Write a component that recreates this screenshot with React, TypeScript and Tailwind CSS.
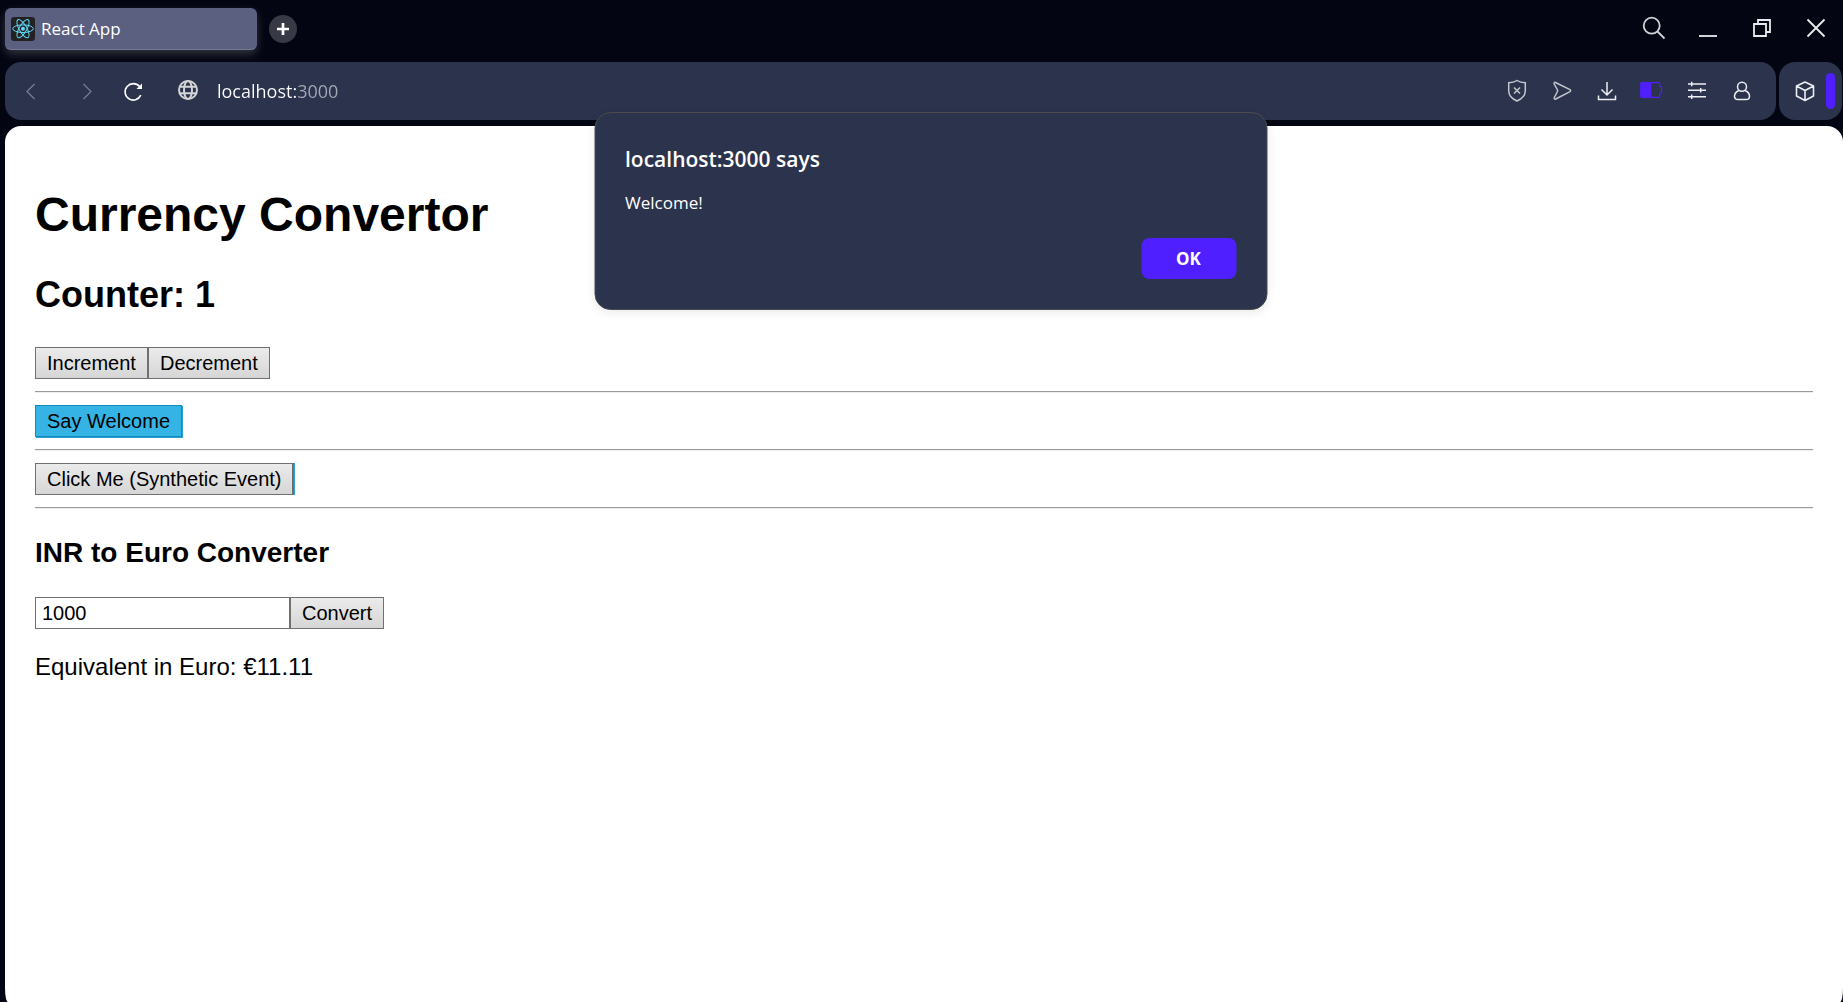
import { useState } from 'react';
import type { ReactNode } from 'react';

function Icon({ children, width = 1.5, className = '' }: { children: ReactNode; width?: number; className?: string }) {
  return (
    <svg viewBox="0 0 24 24" className={`size-6 shrink-0 ${className}`} fill="none" stroke="currentColor" strokeWidth={width} aria-hidden="true">
      {children}
    </svg>
  );
}

function BarButton({ label, className, children }: { label: string; className: string; children: ReactNode }) {
  return (
    <button type="button" aria-label={label} className={`flex h-full shrink-0 items-center justify-center ${className}`}>
      {children}
    </button>
  );
}

function ReactLogo() {
  return (
    <svg viewBox="0 0 24 24" className="size-6 shrink-0" fill="none" stroke="#61dafb" strokeWidth="1" aria-hidden="true">
      <rect width="24" height="24" rx="3" fill="#222" stroke="none" />
      <ellipse cx="12" cy="11.7" rx="10.3" ry="3.8" />
      <ellipse cx="12" cy="11.7" rx="10.3" ry="3.8" transform="rotate(60 12 11.7)" />
      <ellipse cx="12" cy="11.7" rx="10.3" ry="3.8" transform="rotate(120 12 11.7)" />
      <circle cx="12" cy="11.7" r="2" fill="#61dafb" stroke="none" />
    </svg>
  );
}

function TabBar() {
  return (
    <header className="flex h-[62px] shrink-0 items-start justify-between pl-[5px]">
      <div className="flex items-center gap-3 pt-2">
        <div className="flex h-[42px] w-[252px] items-center gap-[6px] rounded-md border-b border-[#747994] bg-[#5b6080] px-[6px] text-[17px] text-white shadow-[0_4px_10px_#ffffff30]">
          <ReactLogo />
          <span>React App</span>
        </div>
        <button type="button" aria-label="New tab" className="flex size-7 items-center justify-center rounded-full bg-[#373a45] text-white">
          <Icon width={2.7}><path d="M12 6v12M6 12h12" /></Icon>
        </button>
      </div>
      <div className="flex h-14 text-[#e8eaed]">
        <BarButton label="Search" className="w-[54px]">
          <Icon width={1.8} className="text-[#d0d2d6]"><circle cx="9.7" cy="9.7" r="8" /><path d="M15.5 15.5l7 7" /></Icon>
        </BarButton>
        <BarButton label="Minimize" className="w-[54px]">
          <Icon width={1.8}><path d="M3 20h18" /></Icon>
        </BarButton>
        <BarButton label="Restore" className="w-[54px]">
          <Icon width={1.8}><path d="M4 8h12v12H4zM8 8V4h12v12h-4" /></Icon>
        </BarButton>
        <BarButton label="Close" className="w-[54px]">
          <Icon width={1.8}><path d="M3.5 3.5l17 17M20.5 3.5l-17 17" /></Icon>
        </BarButton>
      </div>
    </header>
  );
}

function AddressBar() {
  return (
    <nav className="mb-[6px] flex h-[58px] shrink-0 gap-[3px] pr-px pl-[5px] text-[#eceef2]">
      <div className="flex grow items-center rounded-2xl bg-[#2c334d] pr-3 pl-[3px]">
        <BarButton label="Back" className="w-[46px] text-[#767c8e]">
          <Icon width={1.3}><path d="M15.5 5l-7.5 7.5 7.5 7.5" /></Icon>
        </BarButton>
        <BarButton label="Forward" className="ml-[10px] w-[46px] text-[#767c8e]">
          <Icon width={1.3}><path d="M8.5 5l7.5 7.5-7.5 7.5" /></Icon>
        </BarButton>
        <BarButton label="Reload" className="w-[46px] text-white">
          <Icon width={1.6}><path d="M19.8 16.2A8.2 8.2 0 1 1 18.6 7.6" /><path d="M21 4.500v5.500h-5.500z" fill="currentColor" stroke="none" /></Icon>
        </BarButton>
        <BarButton label="Site information" className="ml-[9px] w-[46px] text-[#d4d5d6]">
          <Icon width={2}><circle cx="12" cy="11" r="9" /><ellipse cx="12" cy="11" rx="4" ry="9" /><path d="M4 7.800h16M4 14.200h16" /></Icon>
        </BarButton>
        <input
          type="text"
          aria-label="Address"
          defaultValue="localhost:3000"
          className="ml-[6px] h-9 min-w-0 grow bg-linear-to-r from-white from-[79px] to-[#a3a9b8] to-[79px] bg-clip-text text-[18px] text-transparent outline-none"
        />
        <BarButton label="Ad blocker" className="w-[45px] text-[#c3c6cd]">
          <Icon><path d="M12 1.500c2.500 1.700 5.500 2.200 8.300 2.200v8c0 4.500-3 8-8.300 10.300C6.700 19.700 3.700 16.200 3.700 11.700v-8C6.500 3.700 9.500 3.200 12 1.500zM9 8.500l6 6M15 8.500l-6 6" /></Icon>
        </BarButton>
        <BarButton label="Flow" className="w-[45px] text-[#c3c6cd]">
          <Icon><path d="M5.500 3.500l14.500 7.200c.8.500.8 1.500 0 2L5.800 20c-1.200.5-2-.4-1.500-1.500L7.500 12.500v-1.500L4.200 5C3.700 4 4.500 3 5.500 3.500z" strokeLinejoin="round" /></Icon>
        </BarButton>
        <BarButton label="Downloads" className="w-[45px]">
          <Icon><path d="M12 3v12.500M6.500 10.500L12 16l5.500-5.500M3.500 16.500v4h17v-4" /></Icon>
        </BarButton>
        <BarButton label="Battery saver" className="w-[45px] text-[#4f1fff]">
          <Icon width={1.2}>
            <path d="M2 3.600h16.500c.8 0 1.200.5 1.200 1.200v2.400c1.200.4 1.900 1 1.900 2v3.600c0 1-.7 1.600-1.900 2v2.400c0 .7-.4 1.200-1.200 1.200H2c-.8 0-1.300-.5-1.300-1.200v-12.400c0-.7.5-1.200 1.300-1.200z" />
            <path d="M1 3.600h10.300v14.800H1z" fill="currentColor" stroke="none" />
          </Icon>
        </BarButton>
        <BarButton label="Easy setup" className="w-[45px]">
          <Icon><path d="M3 5h18M3 11.300h18M3 17.700h18M6.700 2.700v4.600M15.700 9v4.600M6.700 15.400v4.600" /></Icon>
        </BarButton>
        <BarButton label="Profile" className="w-[45px]">
          <Icon><circle cx="12" cy="7.700" r="4.500" /><path d="M8.800 11.500c-2.800 1.300-4.300 3.500-4.300 5.700 0 2.300 1.500 3.300 3.500 3.300h8c2 0 3.500-1 3.500-3.300 0-2.200-1.500-4.400-4.300-5.700" /></Icon>
        </BarButton>
      </div>
      <div className="flex w-[63px] items-center rounded-2xl bg-[#2c334d] pr-[7px]">
        <BarButton label="Extensions" className="grow">
          <Icon width={1.6} className="ml-1"><path d="M12 3l8.500 4v10L12 21.500 3.500 17V7zM3.500 7l8.500 4.500L20.500 7M12 11.500v10" strokeLinejoin="round" /></Icon>
        </BarButton>
        <span className="h-9 w-[9px] rounded-full bg-[#4f1fff]" />
      </div>
    </nav>
  );
}

const control = 'h-8 border border-[#707070] text-[20px] leading-none';
const grey = 'bg-linear-to-b from-[#ebebeb] to-[#d6d6d6] px-[11px]';

function Rule() {
  return <hr className="my-3 h-[2px] border-t border-b border-t-[#9a9a9a] border-b-[#eeeeee]" />;
}

export default function App() {
  const [count, setCount] = useState(1);
  const [open, setOpen] = useState(true);
  const [amount, setAmount] = useState('1000');
  const [euro, setEuro] = useState('11.11');

  return (
    <div className="relative flex min-h-screen flex-col bg-[#030612] font-['Open_Sans',sans-serif]">
      <TabBar />
      <AddressBar />
      <main className="ml-[5px] grow rounded-t-2xl bg-white px-[30px] pt-[61px] font-['Liberation_Sans',Arial,sans-serif] text-black [border-bottom-left-radius:3px_14px] [border-bottom-right-radius:3px_14px]">
        <h1 className="text-[48px] leading-[55px] font-bold">Currency Convertor</h1>
        <h2 className="mt-8 mb-8 text-[36px] leading-[41px] font-bold">Counter: {count}</h2>
        <div className="flex">
          <button type="button" className={`${control} ${grey}`} onClick={() => setCount(count + 1)}>Increment</button>
          <button type="button" className={`${control} ${grey}`} onClick={() => setCount(count - 1)}>Decrement</button>
        </div>
        <Rule />
        <div className="flex">
          <button type="button" className="h-8 border border-[#0f8bbd] bg-[#35b3e4] px-[11px] text-[20px] leading-none shadow-[1px_1px_0_#2a9fd0]" onClick={() => setOpen(true)}>Say Welcome</button>
        </div>
        <Rule />
        <div className="flex">
          <button type="button" className={`${control} ${grey} border-r-2 pr-[10px] shadow-[1px_0_0_#2aa3dc]`}>Click Me (Synthetic Event)</button>
        </div>
        <Rule />
        <h3 className="my-7 text-[28px] leading-8 font-bold">INR to Euro Converter</h3>
        <form
          className="flex"
          onSubmit={(e) => {
            e.preventDefault();
            setEuro((Number(amount) / 90).toFixed(2));
          }}
        >
          <input type="text" aria-label="Amount in INR" value={amount} onChange={(e) => setAmount(e.target.value)} className={`${control} w-[255px] bg-white px-[6px]`} />
          <button type="submit" className={`${control} ${grey}`}>Convert</button>
        </form>
        <p className="mt-6 text-[24px] leading-7">Equivalent in Euro: €{euro}</p>
      </main>

      {open && (
        <div role="dialog" aria-labelledby="alert-title" className="absolute top-28 left-1/2 ml-[9px] flex w-[673px] -translate-x-1/2 flex-col rounded-2xl border border-[#4b4c4e] bg-[#2c334d] p-[30px] text-white shadow-[0_3px_10px_#00000014]">
          <h2 id="alert-title" className="text-[21px] leading-8 font-semibold">localhost:3000 says</h2>
          <p className="mt-4 text-[17px] leading-6">Welcome!</p>
          <button type="button" onClick={() => setOpen(false)} className="mt-[23px] h-[41px] w-[95px] self-end rounded-lg bg-[#4f1fff] text-[17px] font-bold">OK</button>
        </div>
      )}
    </div>
  );
}
